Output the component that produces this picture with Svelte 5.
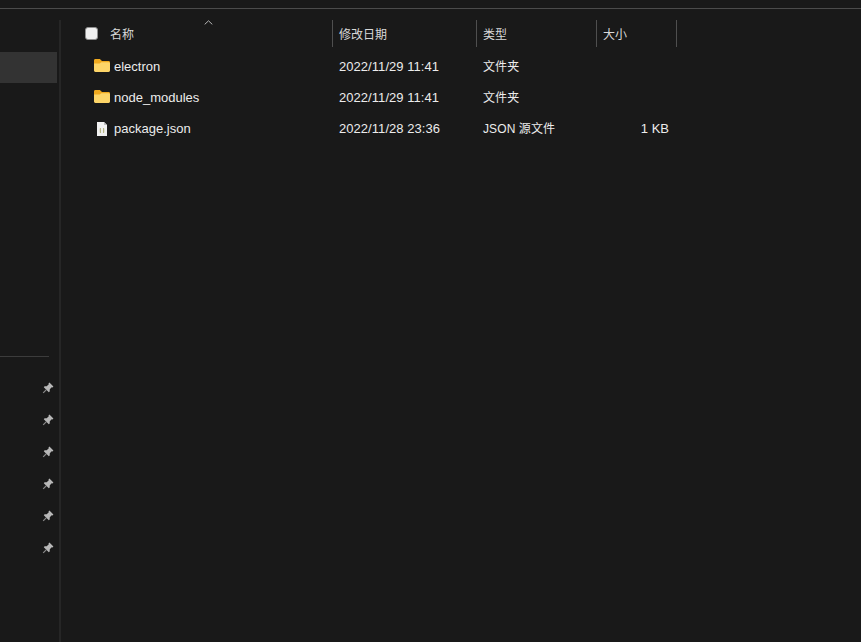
<script lang="ts">
  interface FileRow {
    name: string;
    date: string;
    type: string;
    size: string;
    icon: 'folder' | 'json';
  }

  const files: FileRow[] = [
    { name: 'electron', date: '2022/11/29 11:41', type: '文件夹', size: '', icon: 'folder' },
    { name: 'node_modules', date: '2022/11/29 11:41', type: '文件夹', size: '', icon: 'folder' },
    { name: 'package.json', date: '2022/11/28 23:36', type: 'JSON 源文件', size: '1 KB', icon: 'json' },
  ];

  const pins = [1, 2, 3, 4, 5, 6];
</script>

<div class="explorer">
  <div class="topbar"></div>
  <div class="content">
    <aside class="sidebar">
      <div class="selected"></div>
      <div class="divider"></div>
      <div class="pins">
        {#each pins as pin (pin)}
          <svg class="pin" viewBox="0 0 12 12" aria-hidden="true">
            <path d="M7.400 .6 11.400 4.600 10.500 5.500 9.700 5.200 7.800 7.300 7.700 9.400 6.800 10.200 1.800 5.200 2.600 4.300 4.700 4.200 6.800 2.300 6.500 1.500Z" fill="#b8b8b8" />
            <path d="M4.200 7.800 1.200 10.800" stroke="#8a8a8a" stroke-width="1.200" fill="none" />
          </svg>
        {/each}
      </div>
    </aside>

    <main class="list">
      <div class="header">
        <svg class="sort" viewBox="0 0 9 5" aria-hidden="true">
          <path d="M.7 4.400 4.500.8l3.800 3.600" fill="none" stroke="#b5b5b5" />
        </svg>
        <div class="col name-col head-cell">
          <span class="checkbox"></span>
          <span>名称</span>
        </div>
        <div class="col date-col head-cell">修改日期</div>
        <div class="col type-col head-cell">类型</div>
        <div class="col size-col head-cell">大小</div>
      </div>

      {#each files as file (file.name)}
        <div class="row">
          <div class="col name-col file-name">
            {#if file.icon === 'folder'}
              <svg class="icon" viewBox="0 0 16 13" aria-hidden="true">
                <path d="M0 1.400C0 .6.6 0 1.400 0h4c.4 0 .7.1 1 .4L8 2h6.600c.8 0 1.400.6 1.400 1.400V5H0Z" fill="#f0a91e" />
                <path d="M0 4.400h5.600L7.400 3.200h7.200c.8 0 1.400.6 1.400 1.400v7c0 .8-.6 1.400-1.400 1.400H1.400C.6 13 0 12.400 0 11.600Z" fill="#fdd568" />
              </svg>
            {:else}
              <svg class="icon doc" viewBox="0 0 10 14" aria-hidden="true">
                <path d="M0 0h7l3 3v11H0Z" fill="#f1f1f1" />
                <path d="M7 0l3 3H7Z" fill="#bdbdbd" />
                <path d="M3.900 6.500H3.300v4h.6M6.100 6.500h.6v4h-.6" fill="none" stroke="#a3a35e" stroke-width=".9" />
              </svg>
            {/if}
            <span>{file.name}</span>
          </div>
          <div class="col date-col date">{file.date}</div>
          <div class="col type-col type">{file.type}</div>
          <div class="col size-col size">{file.size}</div>
        </div>
      {/each}
    </main>
  </div>
</div>

<style>
  :global(body) {
    background: #191919;
  }

  .explorer {
    width: 861px;
    height: 642px;
    display: flex;
    flex-direction: column;
    overflow: hidden;
    background: #191919;
    color: #e6e6e6;
    font-family: "Liberation Sans", "Noto Sans CJK SC", sans-serif;
    font-size: 13px;
  }

  .topbar {
    height: 8px;
    flex: none;
    border-bottom: 1px solid #4b4b4b;
  }

  .content {
    flex: 1;
    display: flex;
    min-height: 0;
  }

  .sidebar {
    box-sizing: border-box;
    width: 61px;
    flex: none;
    margin-top: 11px;
    padding-top: 32px;
    border-right: 2px solid #262626;
    display: flex;
    flex-direction: column;
  }

  .selected {
    width: 57px;
    height: 31px;
    background: #333333;
  }

  .divider {
    width: 49px;
    height: 1px;
    margin-top: 273px;
    background: #3c3c3c;
  }

  .pins {
    margin-top: 25px;
    padding-left: 42px;
    display: flex;
    flex-direction: column;
    gap: 20px;
  }

  .pin {
    width: 12px;
    height: 12px;
    display: block;
  }

  .list {
    position: relative;
    flex: 1;
    padding-top: 11px;
  }

  .header,
  .row {
    display: flex;
  }

  .header {
    height: 27px;
    margin-bottom: 4px;
    color: #d8d8d8;
    font-size: 12px;
  }

  .row {
    height: 31px;
    align-items: center;
    color: #ececec;
  }

  .col {
    box-sizing: border-box;
    flex: none;
    padding-left: 6px;
    white-space: nowrap;
  }

  .head-cell {
    display: flex;
    align-items: center;
    padding-bottom: 1px;
    border-right: 1px solid #4f4f4f;
  }

  .name-col {
    width: 272px;
  }

  .date-col {
    width: 144px;
  }

  .type-col {
    width: 120px;
  }

  .size-col {
    width: 80px;
  }

  .header .name-col {
    padding-left: 25px;
    gap: 12px;
  }

  .checkbox {
    box-sizing: border-box;
    width: 13px;
    height: 13px;
    margin-left: -1px;
    border-radius: 3px;
    background: #f0f0f0;
    border: 1px solid #8f8f8f;
  }

  .sort {
    position: absolute;
    left: 143px;
    top: 11px;
    width: 9px;
    height: 5px;
  }

  .file-name {
    padding-left: 33px;
    display: flex;
    align-items: center;
    gap: 4px;
  }

  .icon {
    width: 16px;
    height: 13px;
    margin-top: -2px;
  }

  .icon.doc {
    width: 10px;
    height: 14px;
    margin: 0 3px 0 3px;
  }

  .date {
    letter-spacing: 0.05px;
  }

  .type {
    padding-bottom: 2px;
    font-size: 12px;
    letter-spacing: 0.1px;
  }

  .size {
    padding-right: 8px;
    text-align: right;
  }
</style>
